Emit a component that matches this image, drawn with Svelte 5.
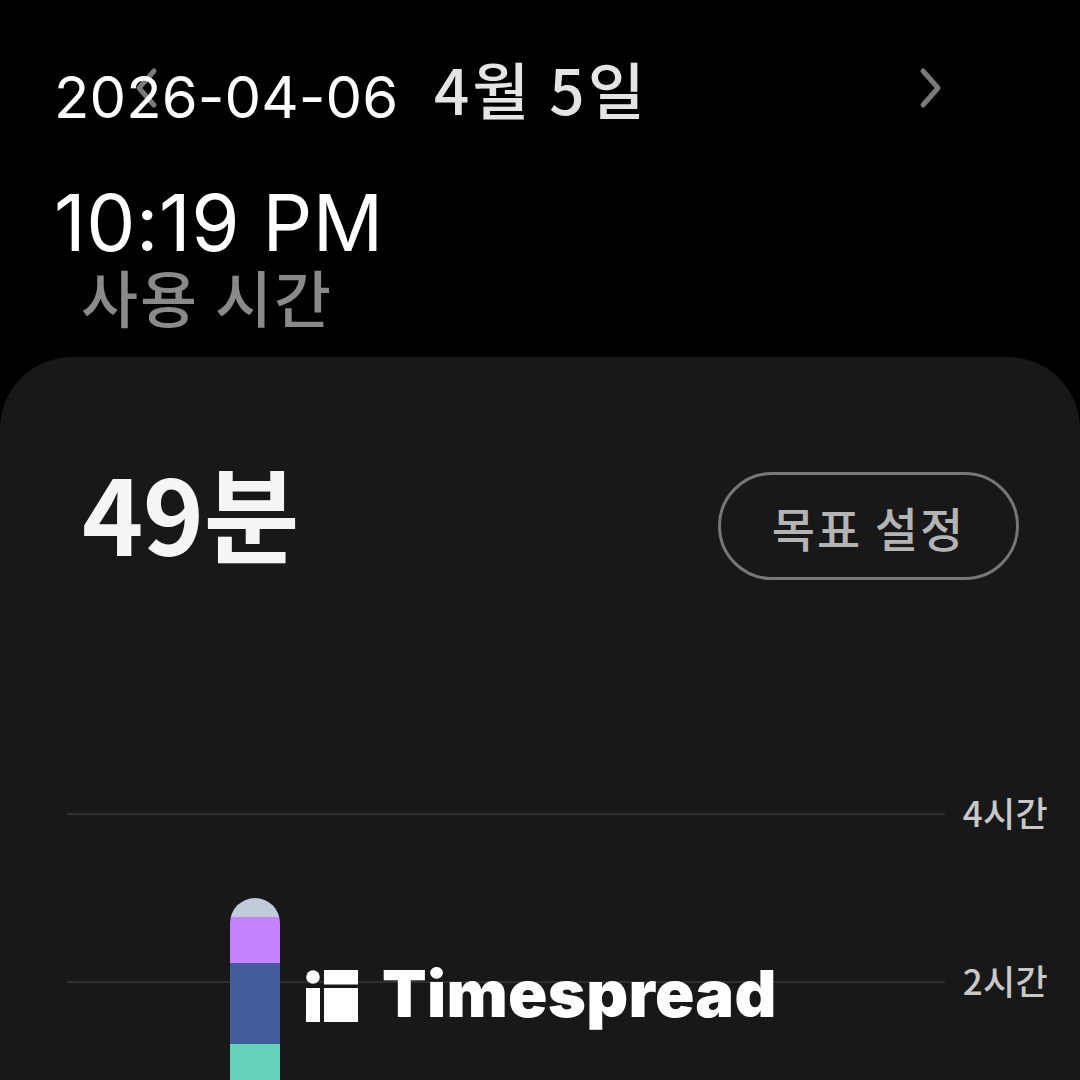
<script>
  const gridLines = [
    { label: '4시간' },
    { label: '2시간' }
  ]
  const segments = [
    { color: '#c0cbdc', height: 19 },
    { color: '#c583ff', height: 46 },
    { color: '#435d9c', height: 81 },
    { color: '#66d2b9', height: 60 }
  ]
</script>

<main class="screen">
  <div class="stamp">
    <div class="stamp-date">2026-04-06</div>
    <div class="stamp-time">10:19 PM</div>
  </div>

  <header class="date-nav">
    <svg class="chev" viewBox="0 0 30 44" aria-hidden="true"><path d="M22 5 L7 22 L22 39" /></svg>
    <h1>4월 5일</h1>
    <span class="spacer"></span>
    <svg class="chev" viewBox="0 0 30 44" aria-hidden="true"><path d="M8 5 L23 22 L8 39" /></svg>
  </header>

  <h2 class="section">사용 시간</h2>

  <section class="card">
    <div class="card-head">
      <div class="total">49분</div>
      <button class="goal">목표 설정</button>
    </div>

    <div class="chart">
      {#each gridLines as line}
        <div class="grid-row">
          <span class="rule"></span>
          <span class="tick">{line.label}</span>
        </div>
      {/each}
      <div class="bar">
        {#each segments as seg}
          <span style="background:{seg.color};height:{seg.height}px"></span>
        {/each}
      </div>
    </div>
  </section>

  <div class="brand">
    <svg viewBox="0 0 52 52" aria-hidden="true">
      <circle cx="7" cy="7" r="6.8" />
      <rect x="0" y="18" width="14" height="34" />
      <rect x="18" y="0" width="34" height="14.5" />
      <rect x="18" y="18" width="34" height="34" />
    </svg>
    <span>Timespread</span>
  </div>
</main>

<style>
  :global(body) { margin: 0; background: #000; }
  .screen {
    position: relative;
    width: 1080px;
    height: 1080px;
    overflow: hidden;
    background: #000;
    font-family: "Noto Sans CJK KR", "Noto Sans", sans-serif;
  }
  .stamp {
    position: absolute;
    left: 54px;
    top: 62px;
    color: #fff;
    font-family: Inter, "Liberation Sans", sans-serif;
    font-weight: 400;
    z-index: 2;
  }
  .stamp-date { font-size: 58px; line-height: 70px; letter-spacing: 0.1px; }
  .stamp-time { font-size: 78px; line-height: 72px; margin-top: 55px; letter-spacing: 0.5px; }
  .date-nav {
    display: flex;
    align-items: center;
    height: 72px;
    padding: 52px 135px 0 132px;
  }
  .chev { width: 30px; height: 44px; fill: none; stroke: #7a7a7a; stroke-width: 5; stroke-linecap: round; stroke-linejoin: round; }
  .date-nav h1 {
    margin: 0 0 0 272px;
    font-size: 62px;
    font-weight: 500;
    line-height: 72px;
    letter-spacing: 3px;
    color: #e4e4e4;
    white-space: nowrap;
  }
  .spacer { flex: 1; }
  .section {
    margin: 138px 0 0 81px;
    font-size: 62px;
    font-weight: 500;
    line-height: 68px;
    letter-spacing: 2px;
    color: #8a8a8a;
  }
  .card {
    margin-top: 27px;
    height: 760px;
    background: #181818;
    border-radius: 72px 72px 0 0;
  }
  .card-head {
    display: flex;
    justify-content: space-between;
    align-items: flex-start;
    padding: 115px 61px 0 82px;
  }
  .total { margin-top: -15px; font-size: 104px; font-weight: 600; line-height: 108px; color: #f5f5f5; letter-spacing: -0.5px; }
  .goal {
    width: 301px;
    height: 108px;
    background: none;
    border: 3px solid #777;
    border-radius: 54px;
    color: #b4b4b4;
    font: 500 47px "Noto Sans CJK KR", sans-serif;
    letter-spacing: 2px;
  }
  .chart { position: relative; padding: 212px 32px 0 67px; }
  .grid-row { display: flex; align-items: center; gap: 18px; height: 40px; margin-bottom: 128px; }
  .rule { flex: 1; height: 2px; margin-top: 4px; background: #2e2e2e; }
  .tick { font-size: 35px; color: #c8c8c8; font-weight: 500; line-height: 40px; letter-spacing: 0.3px; }
  .bar {
    position: absolute;
    left: 230px;
    top: 318px;
    width: 50px;
    display: flex;
    flex-direction: column;
    border-radius: 25px 25px 0 0;
    overflow: hidden;
  }
  .bar span { display: block; }
  .brand {
    position: absolute;
    left: 306px;
    top: 970px;
    display: flex;
    align-items: flex-start;
    gap: 24px;
    color: #fff;
    font: 900 65px/48px Inter, sans-serif;
    letter-spacing: 0.3px;
  }
  .brand svg { width: 52px; height: 52px; fill: #fff; }
</style>
